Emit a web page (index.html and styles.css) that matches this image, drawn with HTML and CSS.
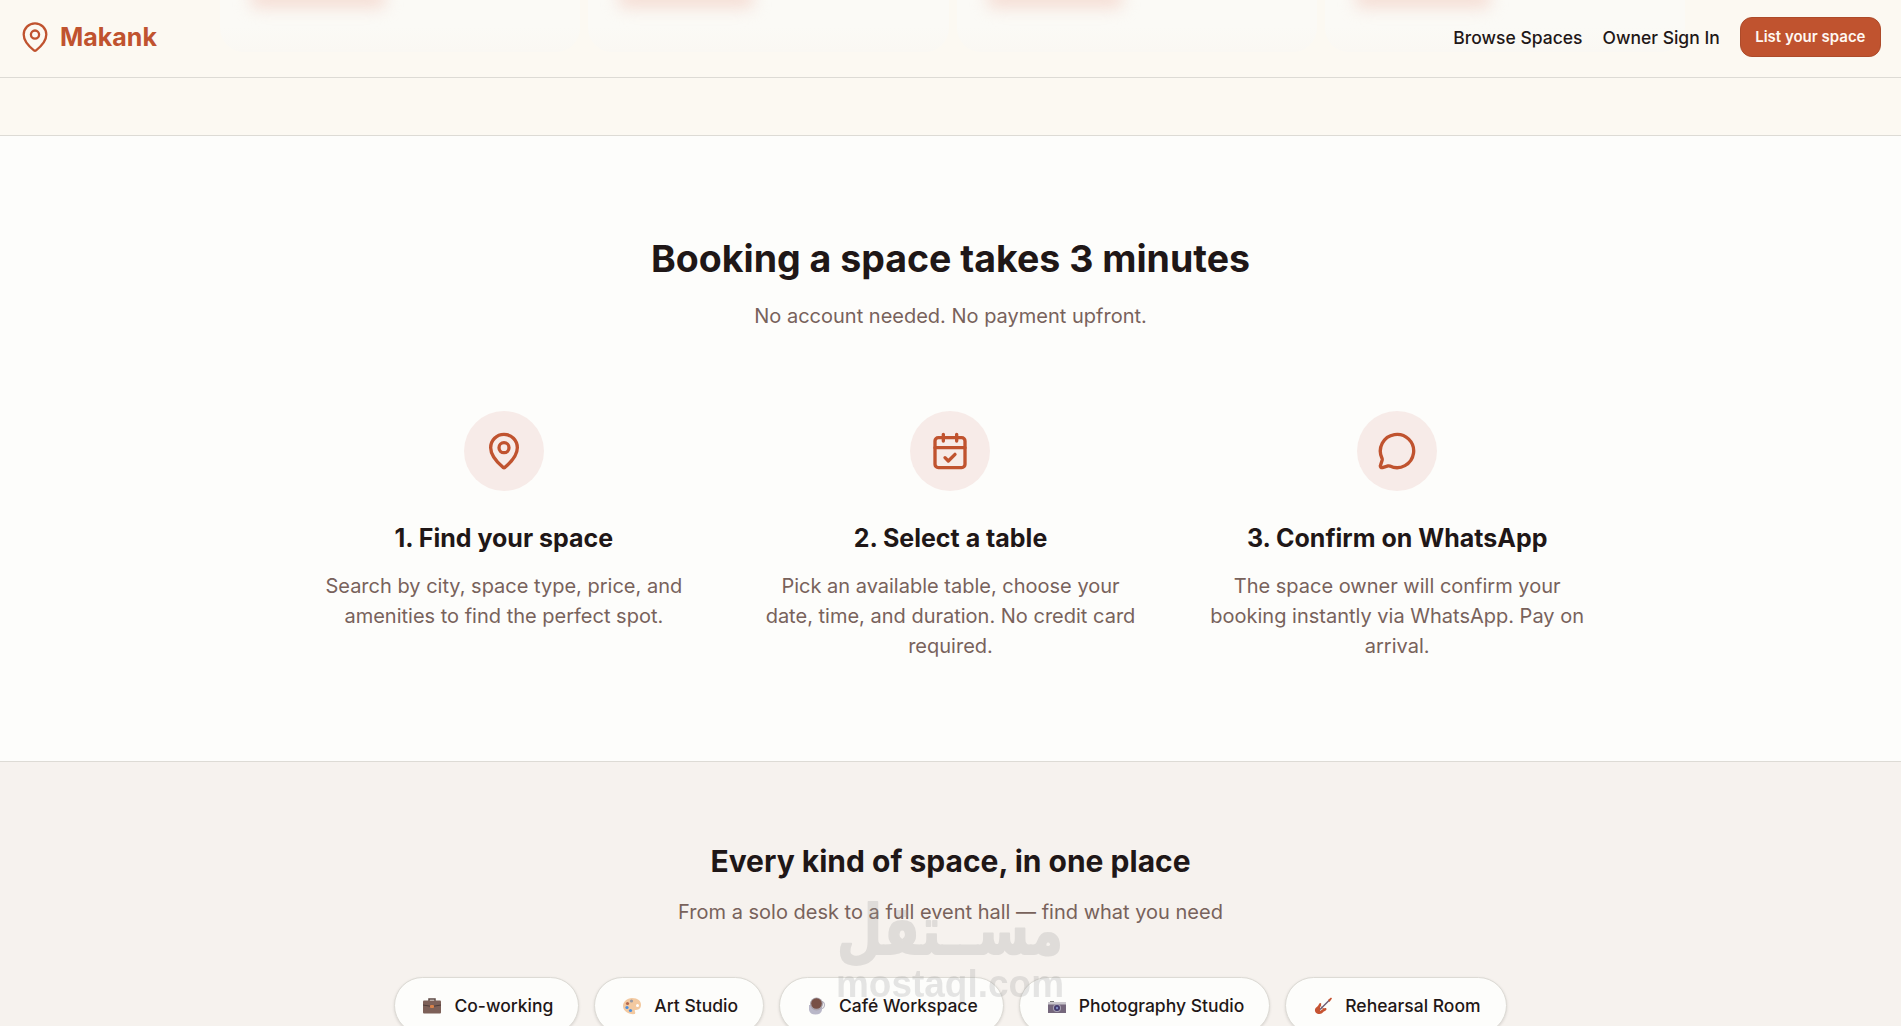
FILE: index.html
```html
<!DOCTYPE html>
<html lang="en">
<head>
  <meta charset="UTF-8" />
  <meta name="viewport" content="width=device-width, initial-scale=1.0"/>
  <title>Makank</title>
  <link rel="stylesheet" href="styles.css">
</head>
<body>
  <header class="header">
    <div class="header-cards">
      <div class="ghost-card"><i></i></div>
      <div class="ghost-card"><i></i></div>
      <div class="ghost-card"><i></i></div>
      <div class="ghost-card"><i></i></div>
    </div>
    <a class="logo" href="#">
      <svg class="logo-icon" viewBox="0 0 26 30"><path d="M24.300 12.600c0 6.600-6.200 12.600-10.200 15.700a1.700 1.700 0 0 1-2.200 0C7.900 25.200 1.700 19.200 1.700 12.600a11.300 11.300 0 0 1 22.600 0Z"/><circle cx="13" cy="12.600" r="4.100"/></svg>
      <span>Makank</span>
    </a>
    <nav class="nav">
      <a class="nav-link" href="#">Browse Spaces</a>
      <a class="nav-link" href="#">Owner Sign In</a>
      <a class="btn" href="#">List your space</a>
    </nav>
  </header>

  <div class="strip"></div>

  <section class="how">
    <h2>Booking a space takes 3 minutes</h2>
    <p class="lead">No account needed. No payment upfront.</p>
    <div class="steps">
      <div class="step">
        <div class="step-icon">
          <svg viewBox="0 0 24 24"><path d="M20 10c0 4.993-5.539 10.193-7.399 11.799a1 1 0 0 1-1.202 0C9.539 20.193 4 14.993 4 10a8 8 0 0 1 16 0"/><circle cx="12" cy="10" r="3"/></svg>
        </div>
        <h3>1. Find your space</h3>
        <p>Search by city, space type, price, and amenities to find the perfect spot.</p>
      </div>
      <div class="step">
        <div class="step-icon">
          <svg viewBox="0 0 24 24"><path d="M8 2v4M16 2v4M3 10h18M9 16l2 2 4-4"/><rect x="3" y="4" width="18" height="18" rx="2"/></svg>
        </div>
        <h3>2. Select a table</h3>
        <p>Pick an available table, choose your date, time, and duration. No credit card required.</p>
      </div>
      <div class="step">
        <div class="step-icon">
          <svg viewBox="0 0 24 24"><path d="M2.992 16.342a2 2 0 0 1 .094 1.167l-1.065 3.290a1 1 0 0 0 1.236 1.168l3.413-.998a2 2 0 0 1 1.099.092 10 10 0 1 0-4.777-4.719"/></svg>
        </div>
        <h3>3. Confirm on WhatsApp</h3>
        <p>The space owner will confirm your booking instantly via WhatsApp. Pay on arrival.</p>
      </div>
    </div>
  </section>

  <section class="kinds">
    <h2>Every kind of space, in one place</h2>
    <p class="lead">From a solo desk to a full event hall — find what you need</p>
    <div class="pills">
      <a class="pill" href="#">
        <svg viewBox="0 0 18 18"><path d="M6 4V2h6v2" fill="none" stroke="#5d4a45" stroke-width="1.500"/><rect y="3.500" width="18" height="13" rx="1" fill="#7d6058"/><path d="M0 8q9 3 18 0" fill="none" stroke="#4f3d39"/><rect x="7" y="8" width="4" height="3" rx="1" fill="#d98149"/></svg>
        Co-working
      </a>
      <a class="pill" href="#">
        <svg viewBox="0 0 18 18"><path d="M9 1c6 0 9 3 9 7 0 4-3 5-6 5-1 1 1 2 0 4-6 1-12-3-12-8 0-4 4-8 9-8z" fill="#f3c9a0"/><circle cx="8.500" cy="4" r="1.600" fill="#9a9aa3"/><circle cx="4.500" cy="6.500" r="1.600" fill="#b5694c"/><circle cx="4" cy="10.500" r="1.600" fill="#4a90e0"/><circle cx="7.500" cy="13.500" r="1.600" fill="#4a90e0"/><circle cx="14.500" cy="8.500" r="1.500" fill="#fff"/></svg>
        Art Studio
      </a>
      <a class="pill" href="#">
        <svg viewBox="0 0 18 18"><circle cx="13" cy="8" r="3.500" fill="none" stroke="#b9b7c3" stroke-width="1.300"/><path d="M1 8h13v5q-1 4.500-6.500 4.500T1 13z" fill="#b9b7c8"/><circle cx="8.500" cy="7" r="6.500" fill="#a9a3ac"/><circle cx="8.500" cy="6.500" r="5.300" fill="#775046"/></svg>
        Café Workspace
      </a>
      <a class="pill" href="#">
        <svg viewBox="0 0 18 18"><path d="M2 4h4v2H2z" fill="#777"/><rect y="5" width="18" height="11" fill="#75677c"/><path d="M0 5h18v2.500H0z" fill="#c9c6cc"/><circle cx="9" cy="11" r="4" fill="#a9a4b5"/><circle cx="9" cy="11" r="3" fill="#443a6d"/><circle cx="9" cy="11" r="1.200" fill="#7e8bc0"/></svg>
        Photography Studio
      </a>
      <a class="pill" href="#">
        <svg viewBox="0 0 18 18"><path d="M5 7c1-2 3-1 2 1 0 2 2 4 4 3 2 0 2 2 0 3-2 0-2 3-5.500 3-3 0-5-2-4.500-4.500S4 10 5 7z" fill="#c65332"/><path d="M6 9l3 3-3 2z" fill="#eee"/><path d="M6 12.500L15.500 3" stroke="#6c5b72" stroke-width="1.500"/><path d="M14 3l3-2.500 1 1L15.500 5z" fill="#c65332"/></svg>
        Rehearsal Room
      </a>
    </div>
  </section>

  <svg class="watermark" viewBox="0 0 240 120">
    <text class="wm-ar" x="120" y="62" textLength="226" lengthAdjust="spacingAndGlyphs">مســتقل</text>
    <text class="wm-en" x="120" y="105" textLength="228" lengthAdjust="spacingAndGlyphs">mostaql.com</text>
  </svg>
</body>
</html>
```

FILE: styles.css
```css
:root {
  --primary: #c0532f;
  --background: #fcf9f2;
  --surface: #fdfdfb;
  --muted-bg: #f6f2ee;
  --text: #1f1717;
  --text-muted: #78625b;
  --border: #dddbd5;
}

* {
  box-sizing: border-box;
  margin: 0;
  padding: 0;
}

body {
  display: flex;
  flex-direction: column;
  height: 100vh;
  overflow: hidden;
  font-family: Inter, "Liberation Sans", sans-serif;
  font-size: 20px;
  line-height: 30px;
  background: var(--background);
  color: var(--text);
}

a {
  color: inherit;
  text-decoration: none;
}

/* Header */
.header {
  position: relative;
  display: flex;
  flex-shrink: 0;
  justify-content: space-between;
  height: 78px;
  padding: 0 20px;
  border-bottom: 1px solid var(--border);
  overflow: hidden;
}

/* Cards scrolled under the translucent header */
.header-cards {
  position: absolute;
  inset: 0 216px auto 220px;
  display: grid;
  grid-template-columns: repeat(4, 1fr);
  gap: 8px;
}

.ghost-card {
  height: 52px;
  border-radius: 0 0 24px 24px;
  background: linear-gradient(#fbfaf6 50%, #faf8f3);
}

.ghost-card i {
  display: block;
  width: 136px;
  height: 20px;
  margin: -12px 0 0 30px;
  border-radius: 8px;
  background: #f5ddd4;
  filter: blur(8px);
}

.logo {
  position: relative;
  display: flex;
  align-items: center;
  gap: 12px;
  height: 74px;
  padding-left: 2px;
  font-size: 25px;
  font-weight: 700;
  color: var(--primary);
}

.logo-icon,
.step-icon svg {
  fill: none;
  stroke: currentColor;
  stroke-width: 2;
  stroke-linecap: round;
  stroke-linejoin: round;
}

.logo-icon {
  width: 26px;
  height: 30px;
  stroke-width: 2.3;
}

.nav {
  position: relative;
  display: flex;
  align-items: center;
  gap: 20px;
  height: 74px;
  font-size: 17.5px;
  font-weight: 500;
}

.nav-link {
  padding-top: 2px;
}

.btn {
  height: 40px;
  padding: 0 14.5px;
  border: 1px solid #ad4b2a;
  border-radius: 12px;
  background: var(--primary);
  color: #fff8f2;
  font-size: 15px;
  font-weight: 600;
  line-height: 37px;
}

.strip {
  flex-shrink: 0;
  height: 58px;
  border-bottom: 1px solid var(--border);
}

/* How it works */
.how {
  flex-shrink: 0;
  padding: 100px 0;
  background: var(--surface);
  border-bottom: 1px solid var(--border);
  text-align: center;
}

.how h2 {
  font-size: 37.5px;
  font-weight: 700;
  line-height: 45px;
  margin-bottom: 20px;
}

.lead {
  color: var(--text-muted);
}

.steps {
  display: grid;
  grid-template-columns: repeat(3, 1fr);
  gap: 60px;
  width: 1280px;
  margin: 80px auto 0;
}

.step-icon {
  display: flex;
  align-items: center;
  justify-content: center;
  width: 80px;
  height: 80px;
  margin: 0 auto 30px;
  border-radius: 50%;
  background: #f7ebe8;
  color: var(--primary);
}

.step-icon svg {
  width: 40px;
  height: 40px;
}

.step h3 {
  font-size: 25px;
  font-weight: 700;
  line-height: 35px;
  margin-bottom: 15px;
}

.step p {
  color: var(--text-muted);
}

/* Space types */
.kinds {
  flex: 1;
  min-height: 0;
  padding-top: 80px;
  background: var(--muted-bg);
  text-align: center;
  overflow: hidden;
}

.kinds h2 {
  font-size: 30px;
  font-weight: 700;
  line-height: 39px;
  margin-bottom: 16px;
}

.pills {
  display: flex;
  justify-content: center;
  gap: 15px;
  margin-top: 50px;
}

.pill {
  display: flex;
  align-items: center;
  gap: 13px;
  height: 57px;
  padding: 0 25px 0 28px;
  border: 1px solid var(--border);
  border-radius: 29px;
  background: var(--surface);
  box-shadow: 0 1px 3px rgba(0, 0, 0, 0.12);
  font-size: 17.5px;
  font-weight: 500;
}

.pill svg {
  width: 18px;
  height: 18px;
}

/* Watermark */
.watermark {
  position: absolute;
  left: 830px;
  top: 892px;
  width: 240px;
  height: 120px;
  overflow: visible;
  opacity: 0.24;
  fill: #999;
  text-anchor: middle;
}

.wm-ar {
  font: 700 68px "DejaVu Sans", sans-serif;
  stroke: #999;
  stroke-width: 2;
  stroke-linejoin: round;
}

.wm-en {
  font: 700 38px "Liberation Sans", sans-serif;
}
```
